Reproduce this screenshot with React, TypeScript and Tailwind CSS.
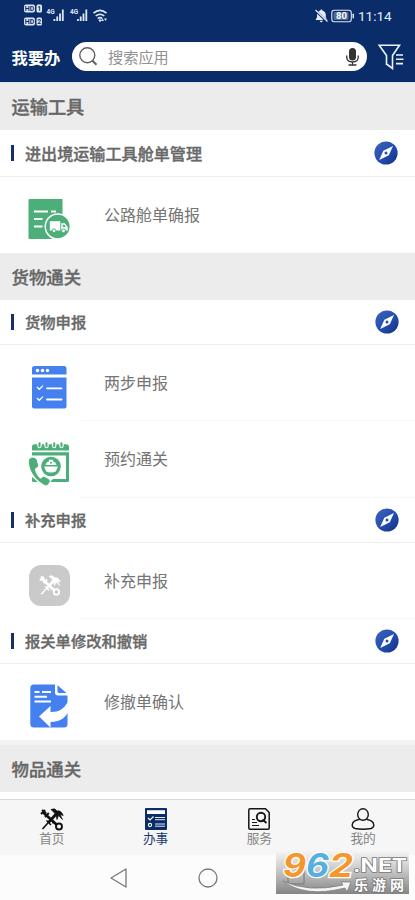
import type { ReactNode } from "react";

const GREEN = "#4caf7a";
const BLUE = "#4480f0";

function StatusBar() {
  return (
    <div className="flex h-8 items-center justify-between pl-6 pr-[23px]">
      <svg width="84" height="22" viewBox="0 0 84 22" className="mb-0.5" fill="#dfe8f8">
        <rect x="0" y="0.5" width="11" height="8" rx="2" />
        <rect x="12.5" y="0.5" width="5.5" height="8" rx="1.5" />
        <rect x="0" y="13.5" width="11" height="8" rx="2" />
        <rect x="12.5" y="13.5" width="5.5" height="8" rx="1.5" />
        <g fill="#0a2d69" fontFamily="Roboto, sans-serif" fontWeight="700" fontSize="7">
          <text x="0.8" y="7.1">HD</text>
          <text x="13.2" y="7.1">1</text>
          <text x="0.8" y="20.1">HD</text>
          <text x="13.2" y="20.1">2</text>
        </g>
        <g fontFamily="Roboto, sans-serif" fontWeight="700" fontSize="6.5" transform="translate(0 2)">
          <text x="22.5" y="8">4G</text>
          <text x="46" y="8">4G</text>
        </g>
        <g transform="translate(0 1)">
          {[29.5, 53].map((x) => (
            <g key={x}>
              <rect x={x} y="14" width="1.8" height="2" />
              <rect x={x + 2.8} y="11.5" width="1.8" height="4.5" />
              <rect x={x + 5.6} y="8.500" width="1.8" height="7.5" />
              <rect x={x + 8.4} y="4.500" width="1.8" height="11.5" />
            </g>
          ))}
          <path d="M69.5 8.2q6.500-5.500 13 0M71.700 11q4.300-3.500 8.600 0M73.800 13.600q2.200-1.800 4.400 0" fill="none" stroke="#dfe8f8" strokeWidth="1.600" />
          <circle cx="76" cy="15.500" r="1.200" />
          <path d="M78.500 13.500l1.500 2.500H77zM81.500 16l-1.500-2.500h3z" />
        </g>
      </svg>
      <div className="flex items-center">
        <svg width="13" height="14" viewBox="0 0 13 14" fill="#e6edfa">
          <path d="M6.300 0.500q1 0 1.100 1Q10.800 2.500 10.800 6v2.500l1.300 2v.4H.7v-.4l1.300-2V6Q2 2.500 5.200 1.500q.1-1 1.100-1z" />
          <path d="M4.800 11.800h3q-.3 1.500-1.500 1.500t-1.500-1.500z" />
          <path d="M0 1.200L12 12.700" stroke="#0a2d69" strokeWidth="2.400" />
          <path d="M.5 1L12.500 12.500" stroke="#e6edfa" strokeWidth="1.200" />
        </svg>
        <svg width="24" height="14" viewBox="0 0 24 14" className="ml-[3px]">
          <rect x="0.800" y="1.300" width="19.500" height="11.400" rx="2.500" fill="none" stroke="#dfe8f8" strokeWidth="1.100" />
          <rect x="2.500" y="3" width="15" height="8" rx="1" fill="#4f6a9c" />
          <rect x="21.500" y="4.500" width="1.500" height="5" rx=".7" fill="#dfe8f8" />
          <text x="10.500" y="10.400" textAnchor="middle" fill="#fff" fontFamily="Roboto, sans-serif" fontWeight="700" fontSize="9.500">80</text>
        </svg>
        <span className="ml-[3px] w-[34px] whitespace-nowrap font-['Roboto',sans-serif] text-[13.500px] leading-4 text-[#e6edfa]">11:14</span>
      </div>
    </div>
  );
}

function Header() {
  return (
    <header className="h-[82px] shrink-0 bg-[#0a2d69]">
      <StatusBar />
      <div className="flex items-center pl-[11.500px] pt-2.5">
        <h1 className="w-[60.500px] whitespace-nowrap text-[16.300px] font-bold leading-7 text-white">我要办</h1>
        <div className="flex h-[29px] w-[295px] items-center rounded-full bg-white pl-[7px] pr-[7px]">
          <svg width="19" height="19" viewBox="0 0 19 19" fill="none" stroke="#606060" strokeWidth="1.400">
            <circle cx="8.300" cy="8.300" r="7.500" />
            <path d="M13.500 13.800l4 4" strokeWidth="2" />
          </svg>
          <span className="-mt-0.5 ml-2.5 flex-1 text-[15.200px] leading-7 text-[#929292]">搜索应用</span>
          <svg width="15" height="20" viewBox="0 0 15 20" fill="#333">
            <rect x="4" y="1" width="7" height="12.500" rx="3.500" />
            <path d="M1.700 8.500v1.300q0 5.200 5.800 5.200t5.800-5.200V8.500M7.500 15v3M3.500 18h8" fill="none" stroke="#333" strokeWidth="1.300" />
          </svg>
        </div>
        <svg width="28" height="27" viewBox="0 0 28 27" className="ml-[11px]" fill="none" stroke="#edf3ff" strokeWidth="1.600">
          <path d="M8.500 22V12.500L1.200 2.300H21.500L14.500 12.500V25.500L8.500 21" />
          <path d="M18 12h7M18 16.300h7.500M18 20.600h7" />
        </svg>
      </div>
    </header>
  );
}

function Section({ title, first = false }: { title: string; first?: boolean }) {
  return (
    <div className={`flex shrink-0 items-center bg-[#ececec] pl-[11.500px] font-medium text-[#666] [-webkit-text-stroke:0.35px_#666] ${first ? "h-12 border-t border-[#d9e6fa] text-[18.200px]" : "h-[47px] pt-0.5 text-[17.400px]"}`}>
      {title}
    </div>
  );
}

function Compass() {
  return (
    <svg width="24" height="24" viewBox="0 0 24 24">
      <defs>
        <linearGradient id="compass" x1="0" y1="0" x2="1" y2="1">
          <stop offset="0" stopColor="#4164b6" />
          <stop offset=".5" stopColor="#244eb3" />
          <stop offset="1" stopColor="#142f80" />
        </linearGradient>
      </defs>
      <circle cx="12" cy="12" r="11.600" fill="url(#compass)" />
      <path d="M19 5L14.800 14.300L5.200 19L9.300 9.700Z" fill="#fff" />
      <circle cx="12" cy="12" r="1.500" fill="#244eb3" />
    </svg>
  );
}

function SubHeader({ title, first = false }: { title: string; first?: boolean }) {
  return (
    <div className={`flex shrink-0 items-center border-b border-[#efefef] pl-[11px] ${first ? "h-[47px] pr-[17px]" : "h-[45px] pr-4"}`}>
      <div className="h-4 w-[3px] bg-[#14306a]" />
      <span className={`ml-[11px] flex-1 font-medium text-[#686868] [-webkit-text-stroke:0.35px_#686868] ${first ? "text-[16.100px]" : "-mt-px text-[15.300px]"}`}>{title}</span>
      <Compass />
    </div>
  );
}

function Item({ title, icon, height = "h-[76px]", line = true }: { title: string; icon: ReactNode; height?: string; line?: boolean }) {
  return (
    <div className={`flex shrink-0 items-stretch ${height}`}>
      <div className="flex w-[81px] items-center pl-7 pt-2">{icon}</div>
      <div className={`flex flex-1 items-center pb-0.5 pl-[23px] text-base text-[#747474] ${line ? "border-b border-[#f6f6f6]" : ""}`}>{title}</div>
    </div>
  );
}

function ManifestIcon() {
  return (
    <svg width="42" height="42" viewBox="0 0 42 42">
      <path d="M1.500 1H34.500V41H1.500Q.5 41 .5 40V2Q.5 1 1.500 1Z" fill={GREEN} />
      <path d="M6 13.500H20M23 13.500H28M6 21H14.500M6 28.500H14.500" stroke="#fff" strokeWidth="1.900" />
      <circle cx="29.800" cy="28.500" r="13.300" fill="#fff" />
      <circle cx="29.800" cy="28.500" r="11.800" fill={GREEN} />
      <path d="M21.800 23.300h10.500v9.200h-10.500zM33.300 25.300h3.500l3 4v3.200h-6.500z" fill="#fff" />
      <path d="M34.800 26.800h1.600l1.500 2.300h-3.100z" fill={GREEN} />
      <circle cx="26" cy="32.800" r="1.900" fill="#fff" stroke={GREEN} strokeWidth="1" />
      <circle cx="35.500" cy="32.800" r="1.900" fill="#fff" stroke={GREEN} strokeWidth="1" />
    </svg>
  );
}

function StepsIcon() {
  return (
    <svg width="42" height="44" viewBox="0 0 42 44">
      <path d="M4 9.500V3.500Q4 1 6.500 1H36Q38.500 1 38.500 3.500V9.500Z" fill={BLUE} />
      <path d="M4 12.500H38.500V41.500Q38.500 43.500 36.500 43.500H6Q4 43.500 4 41.500Z" fill={BLUE} />
      <g fill="#fff"><circle cx="9.500" cy="5.500" r="1.700" /><circle cx="14.500" cy="5.500" r="1.700" /><circle cx="19.500" cy="5.500" r="1.700" /></g>
      <path d="M9 22l2.300 2.300L15 20.600M9 33l2.300 2.300L15 31.600" fill="none" stroke="#fff" strokeWidth="1.300" />
      <path d="M19 23.300H33.500M19 34.500H33.500" stroke="#fff" strokeWidth="1.800" strokeLinecap="round" />
    </svg>
  );
}

function BookingIcon() {
  return (
    <svg width="42" height="44" viewBox="0 0 42 44">
      <path d="M4 8.500V5Q4 2.200 6.500 2.200H38Q41 2.200 41 5.200V8.500Z" fill={GREEN} />
      {[11.500, 18.500, 26.200, 33.500].map((x) => (
        <g key={x}>
          <path d={`M${x - 2.200} 0V4q0 2.200 2.200 2.200t2.200-2.200V0z`} fill="#fff" />
          <path d={`M${x} 1.300V4.300`} stroke={GREEN} strokeWidth="2" strokeLinecap="round" />
        </g>
      ))}
      <path d="M4 10.300H41V38.800Q41 40 39.500 40H22L25 37H38V13.500H4Z" fill={GREEN} />
      <path d="M4 35V39Q4 40 5 40H10Z" fill={GREEN} />
      <circle cx="23" cy="24.500" r="9.800" fill={GREEN} />
      <path d="M16 24.500h14l-2.200 5q-4.800 2.200-9.600 0zM17.500 23q1-3.500 3.500-3.500v-1.800h4v1.800q2.500 0 3.500 3.500z" fill="#fff" />
      <circle cx="23" cy="20.800" r="1" fill={GREEN} />
      <path d="M2.300 16.200Q.6 17.300.8 20.500Q2.500 35.500 17.500 43.600Q20 43.500 21.800 39.500Q22 37.800 20 36.700L15.700 34.500L12.500 36.800Q8 33 6.800 27L10.300 24.200L8.500 17.200Q5.500 14.300 2.300 16.200Z" fill={GREEN} stroke="#fff" strokeWidth="2" paintOrder="stroke" />
    </svg>
  );
}

function CustomsEmblem({ size, color }: { size: number; color: string }) {
  return (
    <svg width={size} height={size} viewBox="0 0 24 24" fill="none" stroke={color}>
      <path d="M3 5.200L17 18" strokeWidth="2.800" />
      <circle cx="19" cy="19.500" r="3" strokeWidth="1.900" />
      <path d="M1 7l4-4M5 10l3.800-4M2 3l4 3" strokeWidth="2" />
      <path d="M18 5L8.500 15.500" strokeWidth="2.800" />
      <path d="M8.800 15L2.500 22" strokeWidth="1.600" />
      <path d="M6.500 13.500l4.500 4.500M9 11.500q4 0 4 5" strokeWidth="1.500" />
      <path d="M11 2.500q4-2 6 1.500q4-1 6.200 4.500l-3.200-1 2.500 5-4-4-1.500 4q-1-4-1.500-5.500l-2.500-2.500z" fill={color} strokeWidth=".7" />
    </svg>
  );
}

function SupplementIcon() {
  return (
    <div className="ml-px flex size-[41px] items-center justify-center rounded-[12px] bg-[#cacaca]">
      <CustomsEmblem size={22} color="#fff" />
    </div>
  );
}

function ReviseIcon() {
  return (
    <svg width="42" height="44" viewBox="0 0 42 44">
      <path d="M6 .5H27V8.500Q27 11.500 30 11.500H39.500V40Q39.500 43.500 36 43.500H6Q2.300 43.500 2.300 40V4Q2.300.5 6 .5Z" fill={BLUE} />
      <path d="M29.500 1.200V7.500Q29.500 9 31 9H38.500Z" fill={BLUE} />
      <path d="M6.500 8H11.500M14 8H23M6.500 12.800H19M6.500 17.500H23" stroke="#fff" strokeWidth="1.900" />
      <path d="M11 32.500L22.500 22V28Q34 28.500 39.500 18.500H41V26Q36.500 38 22.500 38V43.500Z" fill="#fff" />
    </svg>
  );
}

function TasksIcon() {
  return (
    <svg width="22" height="22" viewBox="0 0 22 22">
      <rect x="0" y="0" width="22" height="22" rx="1" fill="#0a2d69" />
      <path d="M2 2.200h18v3.800H2z" fill="#fff" />
      <path d="M3 10l2 2 3.500-3.500" fill="none" stroke="#fff" strokeWidth="1.200" />
      <circle cx="5" cy="17" r="1.600" fill="none" stroke="#fff" strokeWidth="1.100" />
      <path d="M10 9.500h10M10 11.700h10M10 16h10M10 18.200h10" stroke="#fff" strokeWidth=".9" />
    </svg>
  );
}

function ServiceIcon() {
  return (
    <svg width="22" height="22" viewBox="0 0 22 22" fill="none" stroke="#151515" strokeWidth="1.500">
      <path d="M2 .8H17.500L21.200 4.500V20Q21.200 21.200 20 21.200H2Q.8 21.200.8 20V2Q.8.8 2 .8Z" />
      <circle cx="13" cy="9" r="4.200" strokeWidth="1.900" />
      <path d="M14.500 11.500l4 3.500" strokeWidth="1.900" />
      <path d="M4 11.500h3M4 14.500h5M4 17.500h7" strokeWidth="1.200" />
    </svg>
  );
}

function ProfileIcon() {
  return (
    <svg width="24" height="22" viewBox="0 0 24 22" fill="none" stroke="#151515" strokeWidth="1.400">
      <ellipse cx="12" cy="6.500" rx="5.300" ry="5.800" />
      <path d="M8.800 11.300Q1.500 12.500 1.200 17Q1 19.500 4 20.500Q12 22 20 20.500Q23 19.500 22.800 17Q22.500 12.500 15.200 11.300" />
    </svg>
  );
}

function Tab({ label, icon, active = false }: { label: string; icon: ReactNode; active?: boolean }) {
  return (
    <div className="flex flex-1 flex-col items-center pt-2">
      <div className="flex h-[22px] items-center">{icon}</div>
      <span className={`-mt-px text-[12.700px] leading-[18px] ${active ? "text-[#17396f]" : "text-[#858585]"}`}>{label}</span>
    </div>
  );
}

function Watermark() {
  return (
    <svg width="133" height="44" viewBox="0 0 133 44" className="absolute left-[276px] top-[850px] overflow-visible">
      <defs>
        <linearGradient id="plate" x2="0" y2="1">
          <stop stopColor="#f7f7f7" />
          <stop offset=".45" stopColor="#c9c9c9" />
          <stop offset="1" stopColor="#858585" />
        </linearGradient>
      </defs>
      <rect width="133" height="44" fill="url(#plate)" />
      <path d="M12 19h16v15H12z" fill="none" stroke="#777" />
      <path d="M7 31Q32 43 67 35L65 32L75 32L71 42L69 38Q29 48 7 31Z" fill="#f4f4f4" stroke="#777" strokeWidth=".7" />
      <g fontFamily="Inter, sans-serif" fontWeight="700" fontStyle="italic" fontSize="32" stroke="#fff" strokeWidth="2.500" paintOrder="stroke">
        <text x="7" y="27" fill="#f7962b" textLength="23" lengthAdjust="spacingAndGlyphs">9</text>
        <text x="30" y="27" fill="#55afe0" textLength="23" lengthAdjust="spacingAndGlyphs">6</text>
        <text x="53" y="27" fill="#f7962b" textLength="24" lengthAdjust="spacingAndGlyphs">2</text>
      </g>
      <g fill="#fff" stroke="#777" strokeWidth="1.500" paintOrder="stroke" fontWeight="700">
        <text x="77" y="21.500" fontFamily="Inter, sans-serif" fontSize="18.500" textLength="54" lengthAdjust="spacingAndGlyphs">.NET</text>
        <text x="78" y="39.500" fontFamily="Noto Sans CJK SC, sans-serif" fontSize="14" textLength="50">乐游网</text>
      </g>
    </svg>
  );
}

export default function App() {
  return (
    <div className="relative flex h-[900px] w-[415px] flex-col overflow-hidden bg-white font-['Noto_Sans_CJK_SC',sans-serif]">
      <Header />
      <main className="flex h-[717px] shrink-0 flex-col overflow-hidden">
        <Section title="运输工具" first />
        <SubHeader title="进出境运输工具舱单管理" first />
        <Item title="公路舱单确报" icon={<ManifestIcon />} />
        <Section title="货物通关" />
        <SubHeader title="货物申报" />
        <Item title="两步申报" icon={<StepsIcon />} />
        <Item title="预约通关" icon={<BookingIcon />} height="h-[77px]" />
        <SubHeader title="补充申报" />
        <Item title="补充申报" icon={<SupplementIcon />} />
        <SubHeader title="报关单修改和撤销" />
        <Item title="修撤单确认" icon={<ReviseIcon />} line={false} />
        <div className="h-[5px] shrink-0 bg-[#f3f3f3]" />
        <Section title="物品通关" />
      </main>
      <nav className="flex h-14 shrink-0 border-t border-[#d8d8d8] bg-[#f6f6f6]">
        <Tab label="首页" icon={<CustomsEmblem size={24} color="#111" />} />
        <Tab label="办事" icon={<TasksIcon />} active />
        <Tab label="服务" icon={<ServiceIcon />} />
        <Tab label="我的" icon={<ProfileIcon />} />
      </nav>
      <div className="flex h-[45px] shrink-0 items-center bg-[#fcfcfc] pl-[109px]">
        <svg width="20" height="20" viewBox="0 0 20 20" fill="none" stroke="#777" strokeWidth="1.300" strokeLinejoin="round">
          <path d="M2 10L17 1V19Z" />
        </svg>
        <svg width="20" height="20" viewBox="0 0 20 20" className="ml-[68.500px]" fill="none" stroke="#777" strokeWidth="1.300">
          <circle cx="10" cy="10" r="9" />
        </svg>
      </div>
      <Watermark />
    </div>
  );
}
